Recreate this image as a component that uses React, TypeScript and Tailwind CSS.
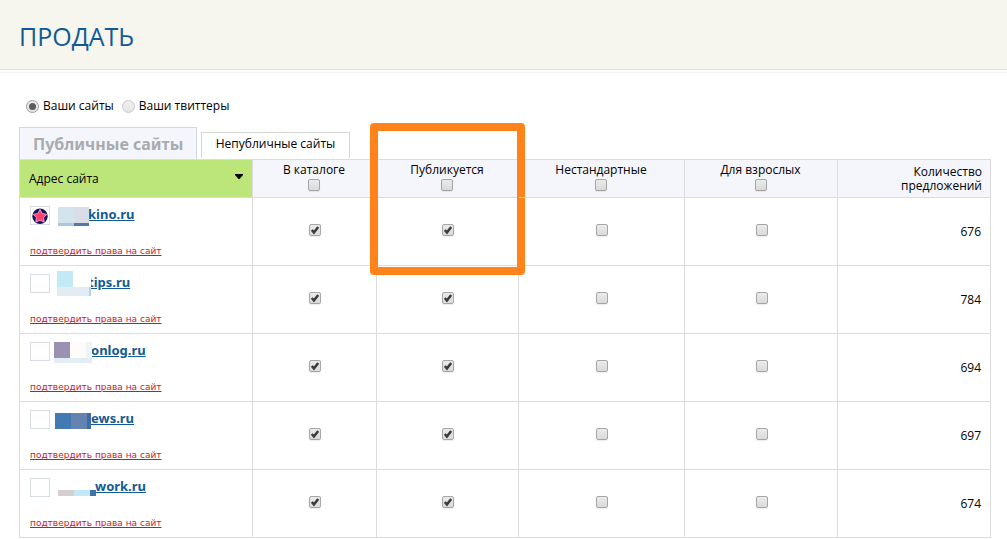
import { useState } from "react";

type Block = string;

interface Site {
  name: string;
  count: number;
  star?: boolean;
  nameStart: string;
  mask: Block[];
}

const sites: Site[] = [
  {
    name: "kino.ru",
    count: 676,
    star: true,
    nameStart: "pl-[38px]",
    mask: [
      "left-[28px] top-[1px] w-[16px] h-[16px] bg-[#d3e4ef]",
      "left-[44px] top-[1px] w-[15px] h-[16px] bg-[#d9dde8]",
      "left-[28px] top-[17px] w-[16px] h-[3px] bg-[#aac8dd]",
      "left-[44px] top-[17px] w-[15px] h-[3px] bg-[#5478a8]",
    ],
  },
  {
    name: "tips.ru",
    count: 784,
    nameStart: "pl-[38px]",
    mask: [
      "left-[27px] top-[-3px] w-[16px] h-[16px] bg-[#c3e8f6]",
      "left-[43px] top-[-3px] w-[18px] h-[16px] bg-white",
      "left-[27px] top-[13px] w-[32px] h-[9px] bg-[#e3ebf4]",
      "left-[59px] top-[13px] w-[2px] h-[9px] bg-[#b7d3e6]",
    ],
  },
  {
    name: "onlog.ru",
    count: 694,
    nameStart: "pl-[41px]",
    mask: [
      "left-[24px] top-0 w-[16px] h-[16px] bg-[#9b92b3]",
      "left-[40px] top-0 w-[16px] h-[16px] bg-[#fdfcfa]",
      "left-[56px] top-0 w-[6px] h-[16px] bg-[#eef4f9]",
      "left-[24px] top-[16px] w-[38px] h-[5px] bg-[#e3edf4]",
    ],
  },
  {
    name: "ews.ru",
    count: 697,
    nameStart: "pl-[41px]",
    mask: [
      "left-[25px] top-[3px] w-[16px] h-[16px] bg-[#427ab1]",
      "left-[41px] top-[3px] w-[16px] h-[16px] bg-[#6583b1]",
      "left-[57px] top-[3px] w-[4px] h-[16px] bg-[#3f6ba6]",
    ],
  },
  {
    name: "work.ru",
    count: 674,
    nameStart: "pl-[45px]",
    mask: [
      "left-[28px] top-[12px] w-[16px] h-[6px] bg-[#d5cfd2]",
      "left-[44px] top-[12px] w-[16px] h-[6px] bg-[#c3e8f6]",
      "left-[60px] top-[12px] w-[6px] h-[6px] bg-[#3c74ab]",
    ],
  },
];

const columns = ["В каталоге", "Публикуется", "Нестандартные", "Для взрослых"];

function Check({ label, initial = false }: { label: string; initial?: boolean }) {
  const [on, setOn] = useState(initial);
  return (
    <span className="relative block size-3">
      <input
        type="checkbox"
        aria-label={label}
        checked={on}
        onChange={() => setOn(!on)}
        className="block size-3 appearance-none rounded-[2px] border border-[#a6a6a6] bg-linear-to-b from-[#ebebeb] to-[#dadada] shadow-[0_1px_1px_#00000014]"
      />
      {on && (
        <svg viewBox="0 0 12 12" className="pointer-events-none absolute inset-0 size-3" aria-hidden="true">
          <path d="M2.8 6 4.9 8.5 9.2 2.9" fill="none" stroke="#3c3c3c" strokeWidth="2.5" />
        </svg>
      )}
    </span>
  );
}

function Radio({ label, checked, onSelect }: { label: string; checked: boolean; onSelect: () => void }) {
  return (
    <label className="flex items-center gap-1">
      <span className="relative block size-[13px]">
        <input
          type="radio"
          name="kind"
          checked={checked}
          onChange={onSelect}
          className="block size-[13px] appearance-none rounded-full border border-[#c9c9c9] bg-linear-to-b from-[#f0f0f0] to-[#e4e4e4] checked:border-[#9c9c9c]"
        />
        {checked && <span className="pointer-events-none absolute inset-[3px] rounded-full bg-[#5c5c5c]" />}
      </span>
      {label}
    </label>
  );
}

function StarIcon() {
  return (
    <svg viewBox="0 0 16 16" className="size-4" aria-hidden="true">
      <circle cx="8" cy="8.2" r="7.7" fill="#14145e" />
      <path
        d="M8 1.4 10.2 5.6 14.6 6.4 11.6 9.6 12.1 14 8 12.2 3.9 14 4.4 9.6 1.4 6.4 5.8 5.6Z"
        fill="#fb3f6c"
        stroke="#f59ab8"
        strokeWidth="1"
        strokeLinejoin="round"
      />
    </svg>
  );
}

export default function App() {
  const [kind, setKind] = useState("sites");
  return (
    <div className="bg-white font-['Open_Sans','Noto_Sans',sans-serif] text-[12px] text-black">
      <header className="border-b border-[#e2e4da] bg-[#f6f6ee] px-[19px] pt-[18px] pb-[15px]">
        <h1 className="text-[25px] leading-9 text-[#135a94]">ПРОДАТЬ</h1>
      </header>
      <div className="mt-[2px] h-px bg-[#f3f3ef]" />

      <main className="pr-4 pl-[19px]">
        <div className="flex gap-2 pt-6 pl-[7px] leading-[18px]">
          <Radio label="Ваши сайты" checked={kind === "sites"} onSelect={() => setKind("sites")} />
          <Radio label="Ваши твиттеры" checked={kind === "tw"} onSelect={() => setKind("tw")} />
        </div>

        <div className="mt-3 flex items-start gap-1">
          <button className="h-8 w-[178px] border border-b-0 border-[#d3d8e0] bg-[#f4f6fb] pl-[13px] text-left font-['Noto_Sans',sans-serif] text-[16px] font-bold whitespace-nowrap text-[#a9abae]">
            Публичные сайты
          </button>
          <button className="mt-[5px] h-[26px] w-[149px] border border-b-0 border-[#d6d6d6] bg-white pb-1">
            Непубличные сайты
          </button>
        </div>

        <table className="w-full table-fixed border-separate border-spacing-0 border-t border-l border-[#dcdcdc]">
          <colgroup>
            <col className="w-[233px]" />
            <col className="w-[124px]" />
            <col className="w-[142px]" />
            <col className="w-[166px]" />
            <col className="w-[153px]" />
            <col />
          </colgroup>
          <thead>
            <tr className="h-[38px] bg-[#f4f6fb]">
              <th className="border-r border-b border-[#dcdcdc] bg-[#bde67a] px-[9px] py-0 font-normal">
                <button className="flex w-full items-center justify-between text-left">
                  Адрес сайта
                  <svg viewBox="0 0 8 5" className="mb-[5px] h-[5px] w-2" aria-hidden="true">
                    <path d="M0 0H8V1L4.5 5H3.5L0 1Z" />
                  </svg>
                </button>
              </th>
              {columns.map((c) => (
                <th key={c} className="relative border-r border-b border-[#dcdcdc] p-0 font-normal">
                  <div className="flex flex-col items-center gap-px pr-px pb-1 leading-4">
                    {c}
                    <Check label={c} />
                  </div>
                  {c === "Публикуется" && (
                    <div className="pointer-events-none absolute -top-[37px] -right-[7px] -left-[7px] h-[152px] rounded-[4px] border-8 border-[#ff821b]" />
                  )}
                </th>
              ))}
              <th className="border-r border-b border-[#dcdcdc] py-0 pr-2 pl-10 text-right leading-[14px] font-normal">
                Количество предложений
              </th>
            </tr>
          </thead>
          <tbody>
            {sites.map((s) => (
              <tr key={s.name} className="h-[68px]">
                <td className="border-r border-b border-[#dcdcdc] py-0 pr-0 pl-[10px] align-top">
                  <div className="relative flex h-12 items-start pt-2">
                    <span className="flex h-[19px] w-5 items-center justify-center border border-[#d9dde6]">
                      {s.star && <StarIcon />}
                    </span>
                    <a href="#site" className={`${s.nameStart} -mt-px font-['Noto_Sans',sans-serif] text-[13px] leading-[18px] font-bold text-[#135a94] underline`}>
                      {s.name}
                    </a>
                    <div className="absolute top-2 left-0">
                      {s.mask.map((m) => (
                        <span key={m} className={`absolute ${m}`} />
                      ))}
                    </div>
                  </div>
                  <a href="#confirm" className="block font-['DejaVu_Sans',sans-serif] text-[9px] leading-[11px] text-[#d3141b] underline">
                    подтвердить права на сайт
                  </a>
                </td>
                {columns.map((c, i) => (
                  <td key={c} className="border-r border-b border-[#dcdcdc] p-0">
                    <div className="flex justify-center pb-1 pl-px">
                      <Check label={`${s.name}: ${c}`} initial={i < 2} />
                    </div>
                  </td>
                ))}
                <td className="border-r border-b border-[#dcdcdc] py-0 pr-[9px] pl-0 text-right">{s.count}</td>
              </tr>
            ))}
          </tbody>
        </table>
      </main>
    </div>
  );
}
